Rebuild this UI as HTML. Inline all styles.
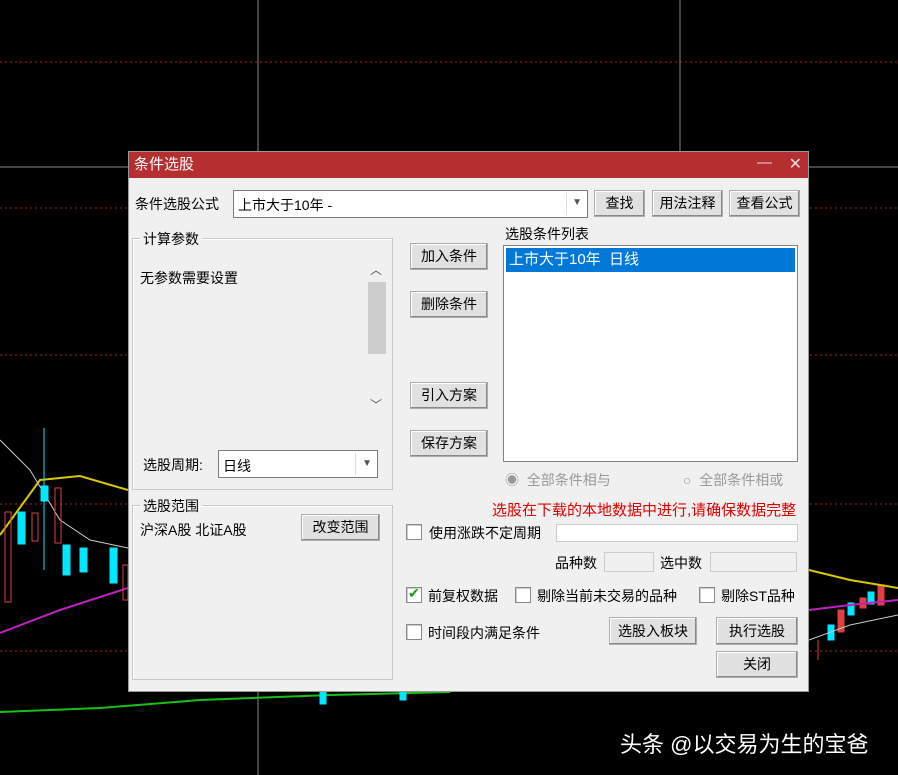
<!DOCTYPE html>
<html><head><meta charset="utf-8"><style>
*{box-sizing:border-box;margin:0;padding:0}
body{width:898px;height:775px;background:#000;position:relative;overflow:hidden;font-family:"Liberation Sans","Noto Sans CJK SC","WenQuanYi Zen Hei",sans-serif;font-size:14px;color:#000}
.a{position:absolute}
.btn{position:absolute;background:#e1e1e1;border:1px solid #adadad;box-shadow:inset -1px -1px 0 #888,inset 1px 1px 0 #fff;text-align:center;font-size:14px}
.box{position:absolute;background:#fff;border:1px solid #a0a0a0}
.grp{position:absolute;border:1px solid #c8c8c8;box-shadow:1px 1px 0 #fff inset}
.lg{position:absolute;background:#f0f0f0;padding:0 3px;font-size:14px}
.cb{position:absolute;width:16px;height:16px;background:#fff;border:1px solid #8a8a8a;box-shadow:inset 1px 1px 0 #ccc}
.t{position:absolute;white-space:nowrap;font-size:14px}
</style></head><body>
<svg class="a" style="left:0;top:0" width="898" height="775">
<g stroke="#b02020" stroke-dasharray="2,3" stroke-width="1">
<line x1="0" y1="62" x2="898" y2="62"/><line x1="0" y1="208" x2="898" y2="208"/>
<line x1="0" y1="355" x2="898" y2="355"/><line x1="0" y1="504" x2="898" y2="504"/><line x1="0" y1="651" x2="898" y2="651"/>
</g>
<line x1="0" y1="167" x2="898" y2="167" stroke="#888"/>
<line x1="258" y1="0" x2="258" y2="775" stroke="#888"/>
<line x1="680" y1="0" x2="680" y2="160" stroke="#888"/>
<polyline points="0,712 100,708 200,700 330,695 450,692" fill="none" stroke="#18c018" stroke-width="2"/>
<polyline points="0,633 60,610 128,588" fill="none" stroke="#c020c0" stroke-width="2"/>
<polyline points="0,535 40,480 80,476 128,490" fill="none" stroke="#d8c800" stroke-width="2"/>
<polyline points="0,440 30,470 60,520 90,540 128,548" fill="none" stroke="#ccc"/>
<g fill="#00e8ff" stroke="#00e8ff"><rect x="18" y="512" width="7" height="32"/><line x1="44" y1="428" x2="44" y2="570"/><rect x="41" y="486" width="7" height="15"/><rect x="63" y="545" width="7" height="30"/><rect x="80" y="548" width="7" height="24"/><rect x="110" y="548" width="7" height="35"/></g>
<g fill="none" stroke="#e04040"><rect x="5" y="512" width="6" height="90"/><rect x="32" y="513" width="6" height="28"/><rect x="55" y="488" width="6" height="55"/><rect x="123" y="565" width="5" height="35"/></g>
<g fill="#e04040" stroke="#e04040"><line x1="818" y1="640" x2="818" y2="660"/><rect x="838" y="610" width="6" height="22"/><rect x="860" y="598" width="6" height="10"/><rect x="878" y="585" width="6" height="20"/></g>
<g fill="#00e8ff" stroke="#00e8ff"><rect x="828" y="625" width="6" height="15"/><rect x="848" y="603" width="6" height="12"/><rect x="868" y="592" width="6" height="12"/><rect x="320" y="692" width="6" height="12"/><rect x="400" y="692" width="6" height="8"/></g>
<polyline points="809,570 850,580 898,588" fill="none" stroke="#d8c800" stroke-width="2"/>
<polyline points="809,610 850,605 898,600" fill="none" stroke="#c020c0" stroke-width="2"/>
<polyline points="809,640 850,625 898,615" fill="none" stroke="#ccc"/>
</svg>

<div class="a" style="left:128px;top:151px;width:681px;height:541px;background:#f0f0f0;border:1px solid #999">
<div class="a" style="left:0;top:0;width:679px;height:26px;background:#b52e30;color:#fff;font-size:15px;line-height:26px;padding-left:5px">条件选股<span style="position:absolute;right:36px;top:-2px;color:#ddd">—</span><span style="position:absolute;right:6px;top:0;color:#ddd;font-size:16px">✕</span></div>
</div>

<div class="t" style="left:135px;top:194px">条件选股公式</div>
<div class="box" style="left:233px;top:190px;width:355px;height:28px;border-color:#7a7a7a"><span class="t" style="left:4px;top:4px">上市大于10年 -</span><span class="t" style="right:5px;top:6px;font-size:10px;color:#555">▼</span><div class="a" style="right:20px;top:2px;width:1px;height:22px;background:#ddd"></div></div>
<div class="btn" style="left:594px;top:190px;width:51px;height:27px;line-height:25px">查找</div>
<div class="btn" style="left:652px;top:190px;width:71px;height:27px;line-height:25px">用法注释</div>
<div class="btn" style="left:729px;top:190px;width:71px;height:27px;line-height:25px">查看公式</div>

<div class="grp" style="left:132px;top:238px;width:261px;height:252px"></div>
<div class="lg" style="left:140px;top:229px">计算参数</div>
<div class="t" style="left:140px;top:268px">无参数需要设置</div>
<div class="a" style="left:366px;top:262px;width:20px;height:154px;background:#f0f0f0"></div>
<div class="a" style="left:368px;top:282px;width:18px;height:72px;background:#cdcdcd"></div>
<div class="t" style="left:370px;top:261px;font-size:12px;color:#555">︿</div>
<div class="t" style="left:370px;top:396px;font-size:12px;color:#555">﹀</div>
<div class="t" style="left:143px;top:455px">选股周期:</div>
<div class="box" style="left:218px;top:450px;width:160px;height:28px;border-color:#7a7a7a"><span class="t" style="left:4px;top:5px">日线</span><span class="t" style="right:5px;top:7px;font-size:10px;color:#555">▼</span><div class="a" style="right:21px;top:2px;width:1px;height:22px;background:#ddd"></div></div>

<div class="grp" style="left:132px;top:505px;width:261px;height:175px"></div>
<div class="lg" style="left:140px;top:496px">选股范围</div>
<div class="t" style="left:140px;top:520px">沪深A股 北证A股</div>
<div class="btn" style="left:301px;top:514px;width:79px;height:27px;line-height:25px">改变范围</div>

<div class="btn" style="left:410px;top:243px;width:78px;height:27px;line-height:25px">加入条件</div>
<div class="btn" style="left:410px;top:291px;width:78px;height:27px;line-height:25px">删除条件</div>
<div class="btn" style="left:410px;top:382px;width:78px;height:27px;line-height:25px">引入方案</div>
<div class="btn" style="left:410px;top:430px;width:78px;height:27px;line-height:25px">保存方案</div>

<div class="t" style="left:505px;top:224px">选股条件列表</div>
<div class="box" style="left:503px;top:245px;width:295px;height:217px;border-color:#828282"><div class="a" style="left:2px;top:2px;width:289px;height:24px;background:#0078d7;color:#fff;line-height:24px;padding-left:3px;font-size:15px">上市大于10年&nbsp; 日线</div></div>

<div class="t" style="left:505px;top:470px;color:#999">◉&nbsp; 全部条件相与</div>
<div class="t" style="left:683px;top:470px;color:#999">○&nbsp; 全部条件相或</div>
<div class="t" style="left:492px;top:499px;color:#e00000;font-size:15px">选股在下载的本地数据中进行,请确保数据完整</div>

<div class="cb" style="left:406px;top:524px"></div>
<div class="t" style="left:429px;top:523px">使用涨跌不定周期</div>
<div class="box" style="left:556px;top:524px;width:242px;height:18px;border-color:#ccc"></div>
<div class="t" style="left:555px;top:553px">品种数</div>
<div class="a" style="left:604px;top:552px;width:50px;height:20px;border:1px solid #ccc;background:#f0f0f0"></div>
<div class="t" style="left:660px;top:553px">选中数</div>
<div class="a" style="left:710px;top:552px;width:87px;height:20px;border:1px solid #ccc;background:#f0f0f0"></div>

<div class="cb" style="left:406px;top:587px"><span class="t" style="left:1px;top:-3px;color:#1a9a1a;font-size:14px">✔</span></div>
<div class="t" style="left:428px;top:586px">前复权数据</div>
<div class="cb" style="left:515px;top:587px"></div>
<div class="t" style="left:537px;top:586px">剔除当前未交易的品种</div>
<div class="cb" style="left:699px;top:587px"></div>
<div class="t" style="left:721px;top:586px">剔除ST品种</div>

<div class="cb" style="left:406px;top:624px"></div>
<div class="t" style="left:428px;top:623px">时间段内满足条件</div>
<div class="btn" style="left:609px;top:617px;width:88px;height:28px;line-height:26px">选股入板块</div>
<div class="btn" style="left:716px;top:617px;width:82px;height:28px;line-height:26px">执行选股</div>
<div class="btn" style="left:716px;top:651px;width:82px;height:27px;line-height:25px">关闭</div>

<div class="t" style="left:620px;top:727px;color:#fff;font-size:22px;text-shadow:0 0 2px #000">头条 @以交易为生的宝爸</div>
</body></html>
